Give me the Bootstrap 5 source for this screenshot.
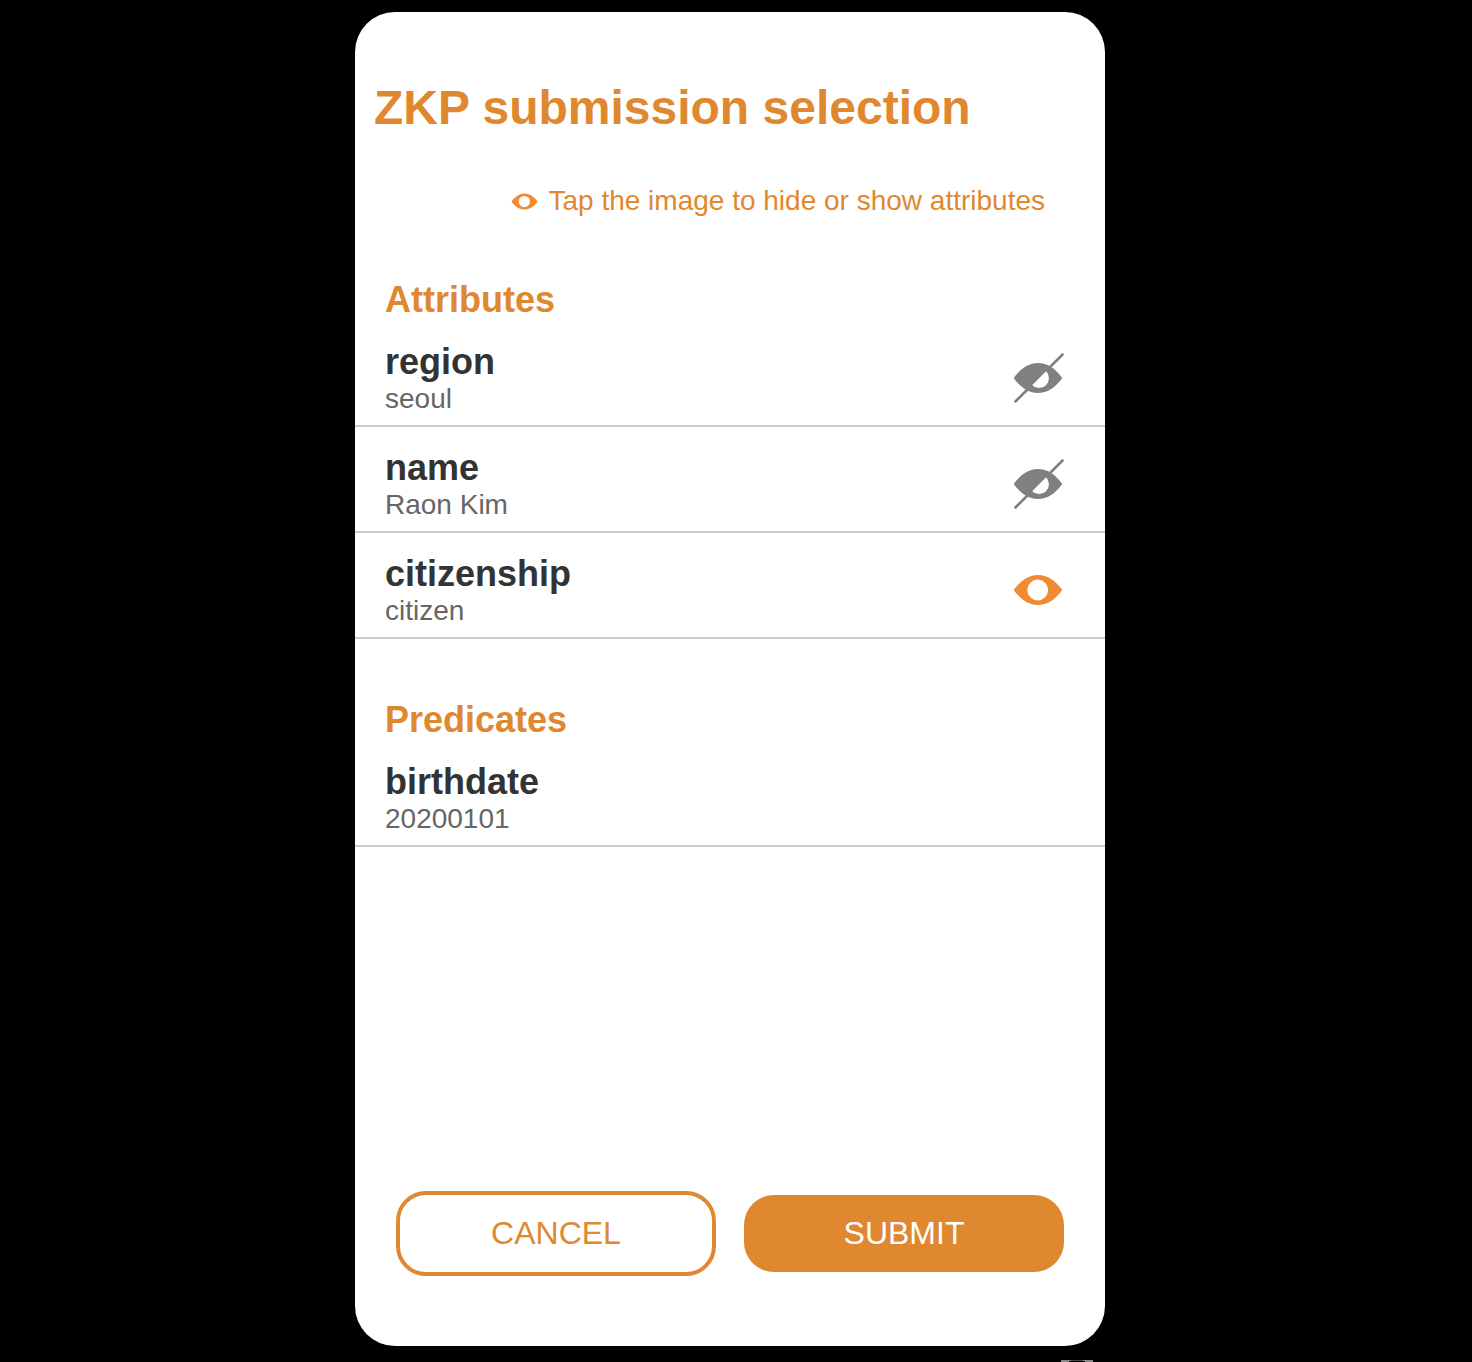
<!DOCTYPE html>
<html lang="en">
<head>
<meta charset="utf-8">
<meta name="viewport" content="width=device-width, initial-scale=1">
<title>ZKP submission selection</title>
<link href="https://cdn.jsdelivr.net/npm/bootstrap@5.3.0/dist/css/bootstrap.min.css" rel="stylesheet">
<style>
  :root { --zkp-orange: #df8830; }
  body { background: #000; font-family: "Liberation Sans", Arial, sans-serif; padding: 12px 12px 0 0; }
  .sheet { width: 100%; max-width: 750px; background: #fff; border-radius: 40px; padding: 68px 0 70px; }
  .accent { color: var(--zkp-orange); }
  .sheet-title { font-size: 48px; line-height: 55px; padding: 0 19px; margin-bottom: 49px; }
  .hint { font-size: 28px; line-height: 34px; gap: 10px; padding: 0 60px 0 30px; margin-bottom: 61px; }
  .section-title { font-size: 36px; line-height: 42px; padding: 0 30px; }
  .claims + .section-title { margin-top: 60px; }
  .claim { padding: 20px 41px 9px 30px; border-bottom: 2px solid #ccc; }
  .claim-name { font-size: 36px; line-height: 41px; color: #333; }
  .claim-value { font-size: 28px; line-height: 34px; color: #666; }
  .eye-btn { line-height: 0; }
  .eye-btn svg { margin-bottom: 2px; }
  .actions { display: grid; grid-template-columns: 1fr 1fr; gap: 28px; padding: 0 41px; }
  .actions .btn { height: 77px; font-size: 32px; border-radius: 30px; padding: 0 0 2px; border: 0; }
  .actions .btn-cancel, .actions .btn-cancel:hover { height: 85px; border: 4px solid var(--zkp-orange); color: var(--zkp-orange); background: #fff; }
  .actions .btn-submit, .actions .btn-submit:hover { color: #fff; background: var(--zkp-orange); }
  .peek { width: 100%; max-width: 750px; padding: 14px 12px 0 0; line-height: 0; }
</style>
</head>
<body class="d-flex flex-column align-items-center min-vh-100">
<svg class="d-none" aria-hidden="true">
  <symbol id="eye" viewBox="0 0 50 50">
    <path fill="#f08b34" fill-rule="evenodd" d="M-.3 25C7 15 15 10 24 10s17 5 24.300 15C41 35 33 40 24 40S7 35-.3 25ZM23.700 14.600a10.400 10.400 0 1 0 0 20.800a10.400 10.400 0 1 0 0-20.800Z"/>
  </symbol>
  <symbol id="eye-off" viewBox="0 0 50 50">
    <path fill="#808080" fill-rule="evenodd" d="M-.3 25C7 15 15 10 24 10s17 5 24.300 15C41 35 33 40 24 40S7 35-.3 25ZM32.100 18.200L18.100 32.200A9.900 9.900 0 0 0 32.100 18.200Z"/>
    <path stroke="#808080" stroke-width="2.700" d="M.7 49.200L18 32M32 18L49.300.8"/>
  </symbol>
</svg>
<main class="sheet d-flex flex-column flex-grow-1">
  <h1 class="sheet-title accent fw-bold">ZKP submission selection</h1>
  <p class="hint accent d-flex align-items-center justify-content-end">
    <svg width="27" height="27" viewBox="-1 0 50 50" aria-hidden="true"><use href="#eye" width="50" height="50"/></svg>
    <span>Tap the image to hide or show attributes</span>
  </p>

  <h2 class="section-title accent fw-bold mb-0">Attributes</h2>
  <ul class="claims list-unstyled mb-0">
    <li class="claim d-flex align-items-center justify-content-between">
      <div>
        <div class="claim-name fw-bold">region</div>
        <div class="claim-value">seoul</div>
      </div>
      <button type="button" class="eye-btn border-0 bg-transparent p-0" aria-label="Show region"><svg width="50" height="50"><use href="#eye-off"/></svg></button>
    </li>
    <li class="claim d-flex align-items-center justify-content-between">
      <div>
        <div class="claim-name fw-bold">name</div>
        <div class="claim-value">Raon Kim</div>
      </div>
      <button type="button" class="eye-btn border-0 bg-transparent p-0" aria-label="Show name"><svg width="50" height="50"><use href="#eye-off"/></svg></button>
    </li>
    <li class="claim d-flex align-items-center justify-content-between">
      <div>
        <div class="claim-name fw-bold">citizenship</div>
        <div class="claim-value">citizen</div>
      </div>
      <button type="button" class="eye-btn border-0 bg-transparent p-0" aria-label="Hide citizenship"><svg width="50" height="50"><use href="#eye"/></svg></button>
    </li>
  </ul>

  <h2 class="section-title accent fw-bold mb-0">Predicates</h2>
  <ul class="list-unstyled mb-0">
    <li class="claim">
      <div class="claim-name fw-bold">birthdate</div>
      <div class="claim-value">20200101</div>
    </li>
  </ul>

  <div class="actions align-items-center mt-auto">
    <button type="button" class="btn btn-cancel">CANCEL</button>
    <button type="button" class="btn btn-submit">SUBMIT</button>
  </div>
</main>
<div class="peek d-flex justify-content-end">
  <svg width="32" height="2" viewBox="0 0 32 2" aria-hidden="true"><path fill="#888" d="M0 0h10v1h-2v1H0ZM22 0h10v2h-8v-1h-2ZM10 0h12v.5H10Z"/></svg>
</div>
<script src="https://cdn.jsdelivr.net/npm/bootstrap@5.3.0/dist/js/bootstrap.bundle.min.js"></script>
</body>
</html>
